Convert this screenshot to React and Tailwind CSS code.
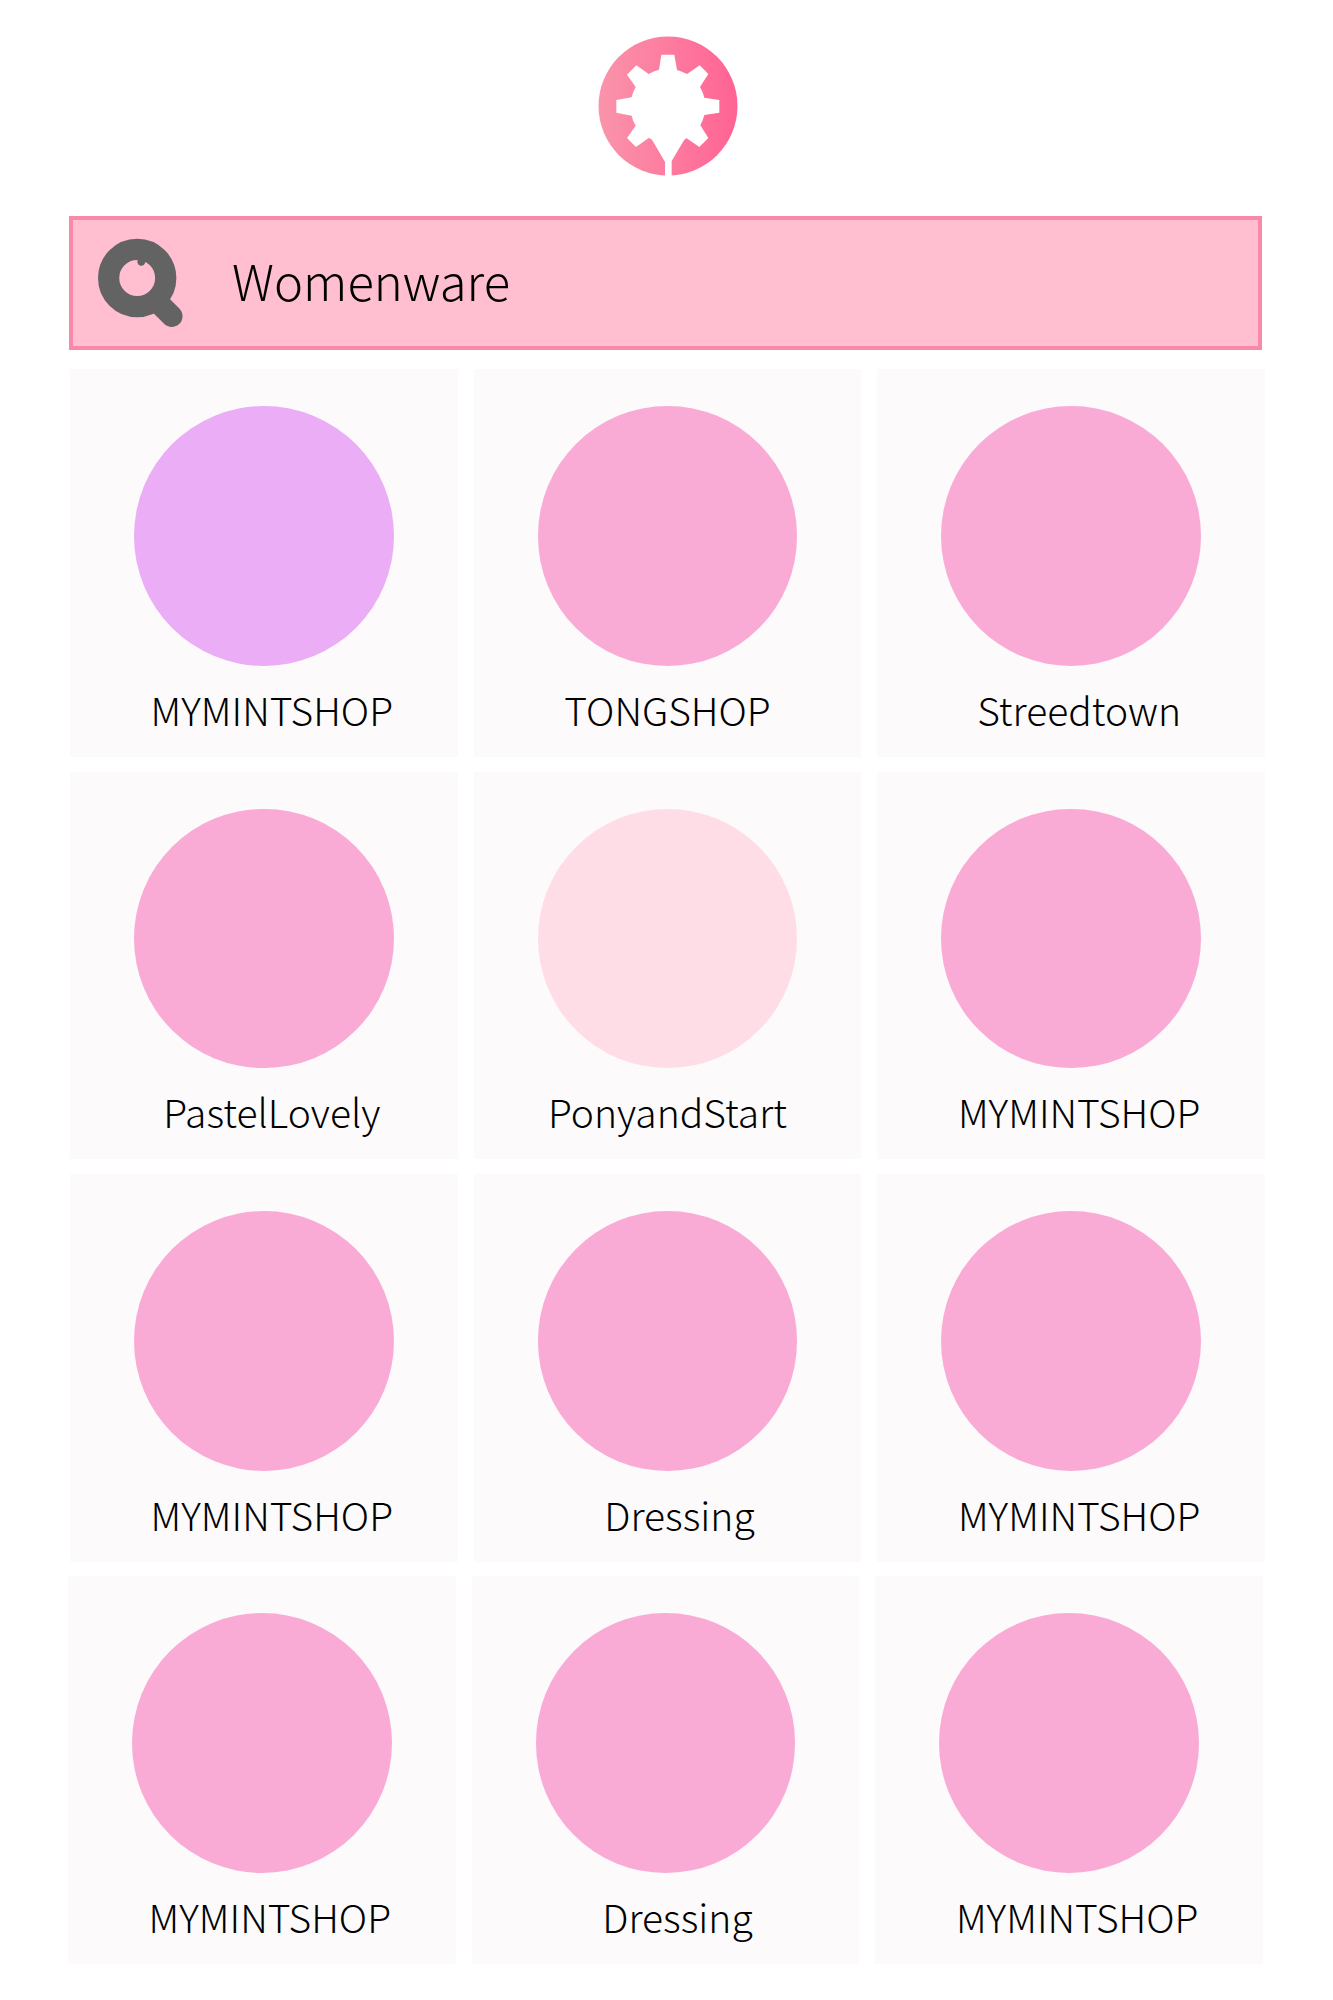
import React from "react";

const PINK = "bg-[#f9abd6]";
const LILAC = "bg-[#ebadf6]";
const BLUSH = "bg-[#ffdde6]";

const shops = [
  { name: "MYMINTSHOP", color: LILAC, label: "pl-4" },
  { name: "TONGSHOP", color: PINK, label: "" },
  { name: "Streedtown", color: PINK, label: "pl-4" },
  { name: "PastelLovely", color: PINK, label: "pl-4" },
  { name: "PonyandStart", color: BLUSH, label: "" },
  { name: "MYMINTSHOP", color: PINK, label: "pl-4" },
  { name: "MYMINTSHOP", color: PINK, label: "pl-4" },
  { name: "Dressing", color: PINK, label: "pl-6" },
  { name: "MYMINTSHOP", color: PINK, label: "pl-4" },
];

const moreShops = [
  { name: "MYMINTSHOP", color: PINK, label: "pl-4" },
  { name: "Dressing", color: PINK, label: "pl-6" },
  { name: "MYMINTSHOP", color: PINK, label: "pl-4" },
];

function Logo() {
  return (
    <svg viewBox="54 46 420 420" className="size-[140px]" role="img" aria-label="Home">
      <defs>
        <linearGradient id="logo-fill" x1="0" x2="1" y1="0" y2="0">
          <stop offset="0" stopColor="#fa94ab" />
          <stop offset="1" stopColor="#ff6393" />
        </linearGradient>
      </defs>
      <circle cx="264" cy="256" r="208.500" fill="url(#logo-fill)" />
      <path
        fill="#fff"
        d="M244 102H283L291 148Q306 152 321 160L359 134L385 160L360 199Q369 214 373 231L418 238V276L373 283Q369 300 361 314L385 352L358 379L320 353Q315 354 312 359L275 421V470H255V424L217 359Q213 353 206 352L168 379L141 352L167 315Q158 300 155 285L109 276V238L155 230Q159 213 167 199L141 162L169 134L206 160Q221 151 237 147Z"
      />
    </svg>
  );
}

function SearchIcon() {
  return (
    <svg viewBox="24 24 256 270" className="h-[90px] w-[85px]" aria-hidden="true">
      <circle cx="142" cy="144" r="86" fill="none" stroke="#636363" strokeWidth="64" />
      <path d="M202 215L246 259" stroke="#636363" strokeWidth="65" strokeLinecap="round" />
      <path d="M143 80V97A12 12 0 0 0 166 99L172 80Z" fill="#636363" />
    </svg>
  );
}

function ShopGrid({ items, className }) {
  return (
    <ul className={`grid grid-cols-3 gap-x-4 gap-y-[15px] ${className}`}>
      {items.map((shop, i) => (
        <li key={i}>
          <a href="#" className="flex flex-col items-center bg-[#fcfafb] pt-[37px] pb-[21px]">
            <span className={`aspect-square w-[67%] rounded-full ${shop.color}`} />
            <span className={`mt-4 text-[39px] leading-[54px] ${shop.label}`}>{shop.name}</span>
          </a>
        </li>
      ))}
    </ul>
  );
}

export default function App() {
  return (
    <div className="min-h-screen bg-white px-[68px] pt-9 pb-9 font-['Noto_Sans_CJK_SC',sans-serif] font-light text-black">
      <header className="flex justify-center pl-0.5">
        <a href="#">
          <Logo />
        </a>
      </header>
      <main className="mt-10 flex flex-col">
        <div className="mr-[3px] ml-px flex items-center gap-[49px] border-4 border-[#f989a8] bg-[#ffbfd0] py-[18px] pl-[25px]">
          <label htmlFor="shop-search" className="shrink-0">
            <SearchIcon />
          </label>
          <input
            id="shop-search"
            type="text"
            aria-label="Search shops"
            defaultValue="Womenware"
            className="h-20 min-w-0 flex-1 bg-transparent pb-2 text-[49px] outline-none"
          />
        </div>
        <ShopGrid items={shops} className="mt-[19px] pl-0.5" />
        <ShopGrid items={moreShops} className="mt-3.5 pr-0.5" />
      </main>
    </div>
  );
}
